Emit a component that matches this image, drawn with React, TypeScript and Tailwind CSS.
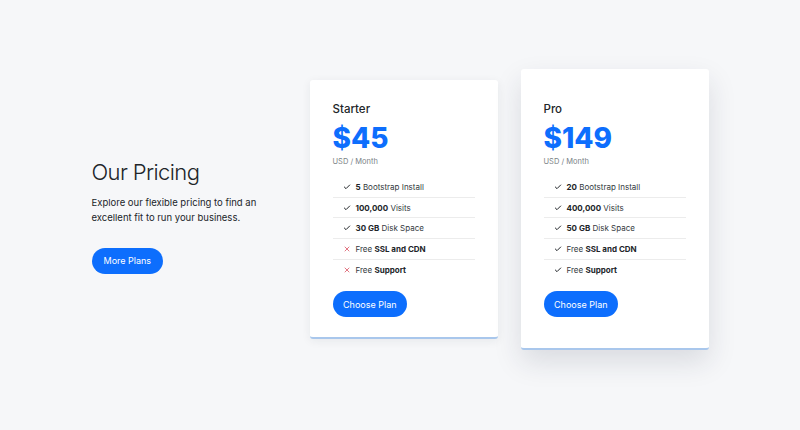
import { Check, X } from "lucide-react";

type Feature = { bold: string; rest: string; boldFirst?: boolean; included: boolean };

const plans: { name: string; price: string; featured?: boolean; features: Feature[] }[] = [
  {
    name: "Starter",
    price: "$45",
    features: [
      { bold: "5", rest: "Bootstrap Install", boldFirst: true, included: true },
      { bold: "100,000", rest: "Visits", boldFirst: true, included: true },
      { bold: "30 GB", rest: "Disk Space", boldFirst: true, included: true },
      { bold: "SSL and CDN", rest: "Free", included: false },
      { bold: "Support", rest: "Free", included: false },
    ],
  },
  {
    name: "Pro",
    price: "$149",
    featured: true,
    features: [
      { bold: "20", rest: "Bootstrap Install", boldFirst: true, included: true },
      { bold: "400,000", rest: "Visits", boldFirst: true, included: true },
      { bold: "50 GB", rest: "Disk Space", boldFirst: true, included: true },
      { bold: "SSL and CDN", rest: "Free", included: true },
      { bold: "Support", rest: "Free", included: true },
    ],
  },
];

function PlanCard({ plan }: { plan: (typeof plans)[number] }) {
  return (
    <div
      className={
        "w-[188px] bg-white rounded-[3px] border-b-2 border-[#a9c7ec] px-[23px] " +
        (plan.featured
          ? "pt-[33px] pb-[31px] shadow-[0_12px_28px_rgba(30,40,60,0.13)]"
          : "pt-[22px] pb-[20px] shadow-[0_2px_10px_rgba(30,40,60,0.07)]")
      }
    >
      <h3 className="text-[11.5px] leading-[14px] font-medium text-[#212529]">{plan.name}</h3>
      <div className="mt-[7.5px] text-[28px] leading-[30px] font-extrabold text-[#0d6efd]">
        {plan.price}
      </div>
      <div className="mt-[3.5px] text-[7.5px] leading-[10px] text-[#7a7f85]">USD / Month</div>
      <ul className="mt-[10.7px]">
        {plan.features.map((f, i) => (
          <li
            key={i}
            className={
              "flex items-center gap-[5px] pl-[10px] h-[20.6px] text-[8px] text-[#343a40] " +
              (i < plan.features.length - 1 ? "border-b border-[#ececec]" : "")
            }
          >
            {f.included ? (
              <Check size={8} strokeWidth={3} className="text-[#212529]" />
            ) : (
              <X size={8} strokeWidth={2.5} className="text-[#dc5a6a]" />
            )}
            {f.boldFirst ? (
              <span>
                <b className="font-bold text-[#212529]">{f.bold}</b> {f.rest}
              </span>
            ) : (
              <span>
                {f.rest} <b className="font-bold text-[#212529]">{f.bold}</b>
              </span>
            )}
          </li>
        ))}
      </ul>
      <button className="mt-[11.3px] h-[26px] px-[10.5px] rounded-full bg-[#0d6efd] text-white text-[9px]">
        Choose Plan
      </button>
    </div>
  );
}

export default function App() {
  return (
    <div
      className="w-[800px] h-[430px] bg-[#f6f7f9] flex items-center justify-center"
      style={{ fontFamily: "Inter, 'Liberation Sans', sans-serif" }}
    >
      <div className="flex items-center w-[617px]">
        <div className="w-[218px] shrink-0 pr-[20px] pt-[2px]">
          <h2 className="text-[22px] leading-[28px] font-light tracking-[-0.6px] text-[#212529]">
            Our Pricing
          </h2>
          <p className="mt-[9px] text-[9.5px] leading-[15px] text-[#212529]">
            Explore our flexible pricing to find an excellent fit to run your business.
          </p>
          <button className="mt-[23px] h-[26px] px-[12px] rounded-full bg-[#0d6efd] text-white text-[9px]">
            More Plans
          </button>
        </div>
        <div className="flex items-center gap-[23px] pb-[11px]">
          {plans.map((p) => (
            <PlanCard key={p.name} plan={p} />
          ))}
        </div>
      </div>
    </div>
  );
}
